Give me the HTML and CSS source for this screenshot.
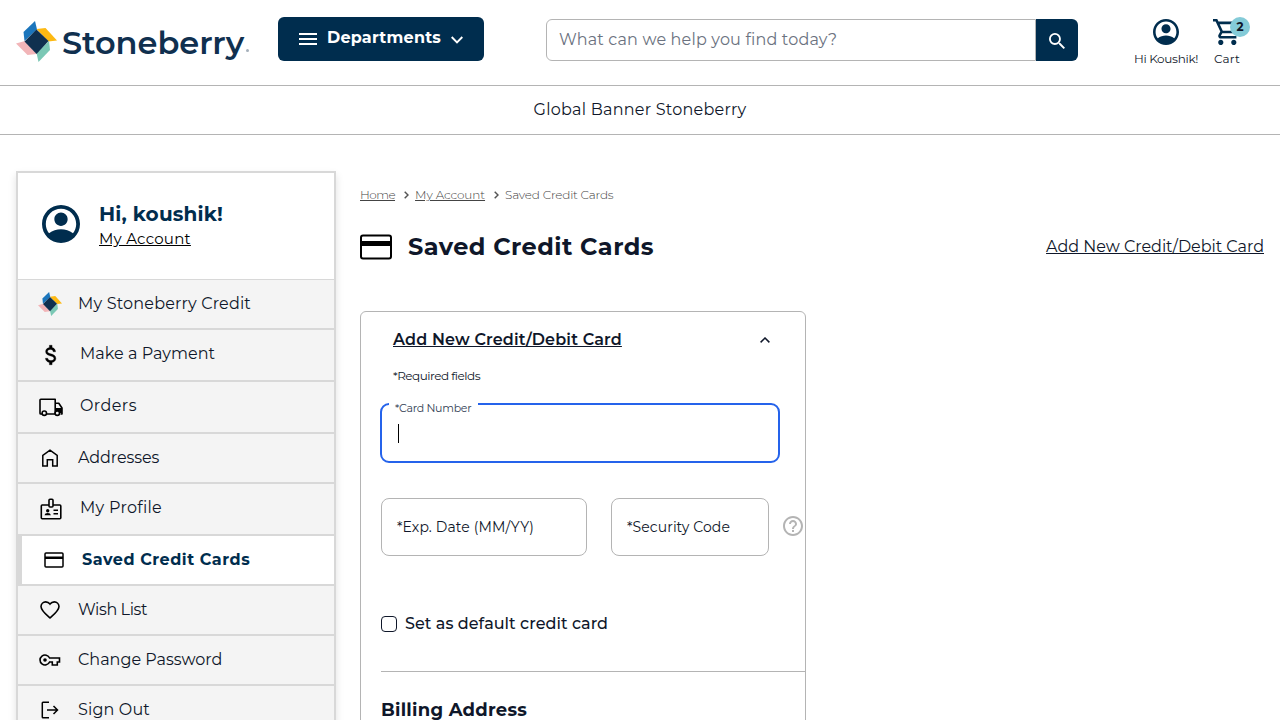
FILE: index.html
```html
<!DOCTYPE html>
<html lang="en">
<head>
<meta charset="utf-8">
<title>Saved Credit Cards</title>
<link rel="stylesheet" href="styles.css">
</head>
<body>
<svg class="defs" width="0" height="0">
  <symbol id="pinwheel" viewBox="0 0 41 41">
    <path fill="#1b75bc" d="M19 0 7.500 11 8.500 20 21 8.500z"/>
    <path fill="#fdb913" d="M20.500 8 29.500 7 41 19.500 32.500 20.500z"/>
    <path fill="#f2b5b8" d="M0 22.500 9 20 20.500 33 11.500 34z"/>
    <path fill="#7bc8b5" d="M33 20 34 29 22.500 41 20.500 32z"/>
    <path fill="#10304f" d="M20.500 8.500 32.500 20 20.500 33 8.500 20.500z"/>
  </symbol>
  <symbol id="account" viewBox="2 2 20 20">
    <path d="M12 2C6.480 2 2 6.480 2 12s4.480 10 10 10 10-4.480 10-10S17.520 2 12 2zM4 12c0-4.420 3.580-8 8-8s8 3.580 8 8c0 1.850-.63 3.550-1.690 4.900C16.450 15.300 14.300 14.700 12 14.700s-4.450.6-6.310 2.200C4.630 15.550 4 13.850 4 12zm8-6c-1.930 0-3.500 1.570-3.500 3.500S10.070 13 12 13s3.500-1.570 3.500-3.500S13.930 6 12 6z"/>
  </symbol>
</svg>
<header class="header">
  <a class="logo">
    <svg class="logo-mark"><use href="#pinwheel"/></svg>
    <span class="logo-word">Stoneberry</span><span class="logo-reg"></span>
  </a>
  <button class="departments">
    <svg width="18" height="12" viewBox="0 0 18 12"><path fill="#fff" d="M0 0h18v2H0zM0 5h18v2H0zM0 10h18v2H0z"/></svg>
    <span class="departments-label">Departments</span>
    <svg class="departments-chevron" width="12" height="8" viewBox="0 0 12 8"><path d="M.7 1l5.300 5.300L11.300 1" fill="none" stroke="#fff" stroke-width="1.900"/></svg>
  </button>
  <div class="search">
    <div class="search-field"><span class="search-text">What can we help you find today?</span></div>
    <div class="search-button"><svg width="16" height="16" viewBox="3 3 17.500 17.500"><path fill="#fff" d="M15.500 14h-.79l-.28-.27A6.471 6.471 0 0 0 16 9.500 6.500 6.500 0 1 0 9.500 16c1.610 0 3.090-.59 4.230-1.570l.27.28v.79l5 4.990L20.490 19l-4.990-5zm-6 0C7.010 14 5 11.990 5 9.500S7.010 5 9.500 5 14 7.010 14 9.500 11.990 14 9.500 14z"/></svg></div>
  </div>
  <div class="tool tool-user">
    <svg class="navy" width="26" height="26"><use href="#account"/></svg>
    <span class="tool-name">Hi Koushik!</span>
  </div>
  <div class="tool tool-cart">
    <svg class="navy cart-icon" width="26" height="26" viewBox="1 2 20 20"><path d="M15.550 13c.75 0 1.410-.41 1.750-1.030l3.580-6.490A.996.996 0 0 0 20.010 4H5.210l-.94-2H1v2h2l3.600 7.590-1.350 2.440C4.520 15.370 5.480 17 7 17h12v-2H7l1.100-2h7.450zM6.160 6h12.150l-2.760 5H8.530L6.160 6zM7 18c-1.100 0-1.990.9-1.990 2S5.900 22 7 22s2-.9 2-2-.9-2-2-2zm10 0c-1.100 0-1.990.9-1.990 2s.89 2 1.990 2 2-.9 2-2-.9-2-2-2z"/></svg>
    <span class="tool-cart-name">Cart</span>
    <b class="badge">2</b>
  </div>
</header>
<div class="banner"><span class="banner-text">Global Banner Stoneberry</span></div>
<main class="page">
  <nav class="side">
    <div class="profile">
      <svg class="navy" width="38" height="38"><use href="#account"/></svg>
      <div class="profile-text">
        <span class="profile-name">Hi, koushik!</span>
        <a class="profile-link">My Account</a>
      </div>
    </div>
    <a class="item"><svg width="24" height="24"><use href="#pinwheel"/></svg><span class="l-credit">My Stoneberry Credit</span></a>
    <a class="item tall"><svg width="26" height="26" viewBox="0 0 24 24"><path stroke="#000" stroke-width=".3" d="M11.800 10.900c-2.270-.59-3-1.200-3-2.150 0-1.090 1.010-1.850 2.700-1.850 1.780 0 2.440.85 2.500 2.100h2.210c-.07-1.720-1.120-3.300-3.210-3.810V3h-2.500v2.160c-1.940.42-3.500 1.680-3.500 3.610 0 2.310 1.910 3.460 4.700 4.130 2.500.6 3 1.480 3 2.410 0 .69-.49 1.790-2.700 1.790-2.060 0-2.870-.92-2.980-2.100h-2.200c.12 2.190 1.760 3.420 3.680 3.830V21H13v-2.150c1.950-.37 3.500-1.500 3.500-3.550 0-2.840-2.430-3.810-4.700-4.400z"/></svg><span class="l-payment">Make a Payment</span></a>
    <a class="item tall"><svg width="26" height="26" viewBox="0 0 26 26"><path d="M4.500 20H2.800q-.8 0-.8-.8V6q0-.8.8-.8h14.400V20H7.500M17.200 9.300h3.600L24 14v6h-1.500" fill="none" stroke="#000" stroke-width="1.600" stroke-linejoin="round"/><path d="M18 14h6v5h-6z"/><circle cx="6.300" cy="19.200" r="2.200" fill="#f4f4f4" stroke="#000" stroke-width="1.600"/><circle cx="19.300" cy="19.200" r="2.200" fill="#f4f4f4" stroke="#000" stroke-width="1.600"/></svg><span class="l-orders">Orders</span></a>
    <a class="item"><svg width="24" height="24" viewBox="0 0 24 24" fill="none" stroke="#000" stroke-width="1.500"><path d="M4.800 20V9.500L12 4.200l7.200 5.300V20h-4.500v-6.200H9.300V20z"/></svg><span class="l-addresses">Addresses</span></a>
    <a class="item tall"><svg width="26" height="26" viewBox="0 0 26 26" fill="none" stroke="#000" stroke-width="1.600"><path d="M11 9H4.200Q3.300 9 3.300 10v11.800q0 1 .9 1h17.600q1 0 1-1V10q0-1-1-1H15"/><rect x="11" y="3.300" width="4" height="7.700" rx="1"/><path d="M15.500 14.300H20M15.500 17.800H20"/><g fill="#000" stroke="none"><circle cx="9.700" cy="14.700" r="1.700"/><path d="M6.500 19.200q.3-2.200 3.200-2.200t3.200 2.200z"/></g></svg><span class="l-profile">My Profile</span></a>
    <a class="item current"><svg width="24" height="24" viewBox="0 0 24 24"><rect x="3" y="5" width="18" height="14" rx="1" fill="none" stroke="#000" stroke-width="1.500"/><path d="M3 8.500h18V11H3z"/></svg><span class="l-saved">Saved Credit Cards</span></a>
    <a class="item"><svg width="24" height="24" viewBox="0 0 24 24" fill="none" stroke="#000" stroke-width="1.600"><path d="M12 20C8 16.500 3 12.500 3 8.500A4.700 4.700 0 0 1 7.700 3.900c1.700 0 3.200.8 4.300 2.200 1.100-1.400 2.600-2.200 4.300-2.200A4.700 4.700 0 0 1 21 8.500c0 4-5 8-9 11.500z"/></svg><span class="l-wish">Wish List</span></a>
    <a class="item"><svg width="24" height="24" viewBox="0 0 24 24" fill="none" stroke="#000" stroke-width="1.600"><path d="M11.600 10A5 5 0 1 0 11.600 14h2.700v3h5v-3h2.200v-4z"/><circle cx="7" cy="12" r="1.800" fill="#000" stroke="none"/></svg><span class="l-password">Change Password</span></a>
    <a class="item"><svg width="24" height="24" viewBox="0 0 24 24" fill="none" stroke="#000" stroke-width="1.500"><path d="M11 4.200H5Q4.300 4.200 4.300 5v14q0 .8.700.8h6M9 12h10M15.500 8l4 4-4 4"/></svg><span class="l-signout">Sign Out</span></a>
  </nav>
  <section class="content">
    <div class="crumbs">
      <a class="crumb-home">Home</a>
      <svg class="sep" width="5" height="8" viewBox="0 0 5 8"><path d="M.7.700 4 4 .7 7.300" fill="none" stroke="#555" stroke-width="1.500"/></svg>
      <a class="crumb-account">My Account</a>
      <svg class="sep" width="5" height="8" viewBox="0 0 5 8"><path d="M.7.700 4 4 .7 7.300" fill="none" stroke="#555" stroke-width="1.500"/></svg>
      <span class="crumb-saved">Saved Credit Cards</span>
    </div>
    <div class="title-row">
      <svg width="32" height="26" viewBox="0 0 32 26"><rect x="1" y="1.500" width="30" height="23" rx="2" fill="none" stroke="#000" stroke-width="2"/><path d="M1 7h30v5H1z"/></svg>
      <h1 class="title">Saved Credit Cards</h1>
      <a class="add-link">Add New Credit/Debit Card</a>
    </div>
    <div class="panel">
      <div class="panel-head">
        <a class="panel-title">Add New Credit/Debit Card</a>
        <svg width="10" height="6" viewBox="0 0 10 6"><path d="M.6 5.400 5 1l4.400 4.400" fill="none" stroke="#0f172a" stroke-width="1.500"/></svg>
      </div>
      <div class="required"><span class="required-text">*Required fields</span></div>
      <div class="number-field"><span class="float-label"><span class="number-label">*Card Number</span></span><i class="caret"></i></div>
      <div class="fields">
        <div class="field exp"><span class="exp-label">*Exp. Date (MM/YY)</span></div>
        <div class="field code"><span class="code-label">*Security Code</span></div>
        <svg class="help" width="20" height="20" viewBox="2 2 20 20"><path fill="#b4b4b4" d="M11 18h2v-2h-2v2zm1-16C6.480 2 2 6.480 2 12s4.480 10 10 10 10-4.480 10-10S17.520 2 12 2zm0 18c-4.410 0-8-3.590-8-8s3.590-8 8-8 8 3.590 8 8-3.590 8-8 8zm0-14c-2.210 0-4 1.790-4 4h2c0-1.100.9-2 2-2s2 .9 2 2c0 2-3 1.750-3 5h2c0-2.250 3-2.500 3-5 0-2.210-1.790-4-4-4z"/></svg>
      </div>
      <label class="default"><span class="box"></span><span class="default-label">Set as default credit card</span></label>
      <div class="billing"><h2 class="billing-title">Billing Address</h2></div>
    </div>
  </section>
</main>
</body>
</html>
```
FILE: styles.css
```css
* { box-sizing: border-box; }
html { overflow: hidden; }
body { margin: 0; height: 720px; overflow: hidden; font-family: Montserrat, Inter, sans-serif; font-size: 16px; line-height: 24px; color: #0f172a; background: #fff; }
.defs { position: absolute; }
svg { display: block; flex: none; }
span, a { white-space: nowrap; }
.navy { fill: #002d4e; }
.header { height: 86px; border-bottom: 1px solid #b4b4b4; display: flex; align-items: flex-start; }
.logo { display: flex; width: 234px; margin: 21px 28px 0 16px; }
.logo-mark { width: 41px; height: 41px; }
.logo-word { width: 183px; margin-left: 5px; font-size: 32px; line-height: 43px; font-weight: 600; letter-spacing: -.05px; color: #10304f; }
.logo-reg { width: 3px; height: 3px; margin: 28px 0 0 1px; border-radius: 50%; background: #a5b0bb; flex: none; }
.departments { width: 206px; height: 44px; margin-top: 17px; padding: 0 0 0 21px; border: 0; border-radius: 6px; background: #002d4e; color: #fff; font: inherit; display: flex; align-items: center; }
.departments-label { margin: -3px 10px 0 10px; font-weight: 700; letter-spacing: .22px; }
.departments-chevron { margin-top: 1px; }
.search { display: flex; width: 532px; height: 42px; margin: 19px 0 0 62px; }
.search-field { width: 490px; border: 1px solid #b4b4b4; border-radius: 6px 0 0 6px; padding: 8px 12px; color: #6b7280; }
.search-text { letter-spacing: .17px; }
.search-button { width: 42px; background: #002d4e; border-radius: 0 6px 6px 0; display: flex; align-items: center; justify-content: center; padding-top: 2px; }
.tool { display: flex; flex-direction: column; align-items: center; font-size: 12px; line-height: 16px; margin-top: 19px; gap: 6px; position: relative; }
.tool-user { margin-left: 56px; width: 64px; }
.tool-name { letter-spacing: -.3px; }
.tool-cart { margin-left: 15px; width: 28px; }
.cart-icon { margin-left: -2px; }
.tool-cart-name { letter-spacing: .15px; }
.badge { position: absolute; left: 17px; top: -2px; width: 20px; height: 20px; border-radius: 50%; background: #84cbd8; line-height: 20px; text-align: center; }
.banner { height: 49px; border-bottom: 1px solid #b4b4b4; text-align: center; padding-top: 12px; }
.banner-text { letter-spacing: .24px; }
.page { display: flex; height: 585px; padding: 36px 16px 0; gap: 24px; overflow: hidden; }
.side { width: 320px; height: 600px; flex: none; border: 2px solid #d8d8d8; box-shadow: 0 4px 8px rgba(0,0,0,.12); }
.profile { height: 107px; border-bottom: 1px solid #d8d8d8; display: flex; padding: 29px 23px 0 23px; gap: 20px; }
.profile > svg { margin: 3px -.5px 0 .5px; }
.profile-text { display: flex; flex-direction: column; align-items: flex-start; }
.profile-name { font-size: 20px; font-weight: 700; line-height: 25px; letter-spacing: .18px; color: #002d4e; }
.profile-link { font-size: 15px; letter-spacing: .25px; color: #000; text-decoration: underline; }
.item { height: 50px; border-bottom: 2px solid #d8d8d8; background: #f4f4f4; padding-left: 20px; display: flex; align-items: center; gap: 16px; }
.item.tall { height: 52px; }
.item.tall span { margin-top: -2px; }
.item.current { background: #fff; border-left: 4px solid #d8d8d8; color: #002d4e; font-weight: 700; }
.l-credit { letter-spacing: .18px; }
.l-payment { letter-spacing: .05px; }
.l-orders { letter-spacing: .42px; }
.l-addresses { letter-spacing: -.1px; }
.l-profile { letter-spacing: .28px; }
.l-saved { letter-spacing: .54px; }
.l-wish { letter-spacing: -.4px; }
.l-signout { letter-spacing: .15px; }
.content { flex: 1; }
.crumbs { margin-top: 16px; height: 16px; display: flex; align-items: center; font-size: 12px; line-height: 16px; color: #444; font-weight: 300; }
.crumbs a, .add-link, .panel-title { text-decoration: underline; }
.crumb-home { letter-spacing: -.53px; }
.crumb-account { letter-spacing: -.07px; }
.crumb-saved { letter-spacing: -.18px; }
.sep { margin: 0 6px 0 9px; }
.title-row { margin-top: 28px; height: 32px; display: flex; align-items: center; }
.title { margin: 0 0 0 16px; font-size: 24px; line-height: 32px; letter-spacing: .46px; }
.add-link { margin-left: auto; letter-spacing: -.02px; }
.panel { width: 446px; height: 560px; margin-top: 48px; border: 1px solid #b4b4b4; border-radius: 6px; padding: 16px 0 0 20px; }
.panel-head { display: flex; align-items: center; justify-content: space-between; padding: 0 35px 0 12px; font-weight: 600; letter-spacing: .15px; }
.required { padding: 16px 0 0 12px; font-size: 12px; line-height: 16px; letter-spacing: -.49px; }
.number-field { position: relative; width: 400px; height: 60px; margin: 19px 0 0 -1px; border: 2px solid #2563eb; border-radius: 9px; }
.float-label { position: absolute; left: 7px; top: -5px; width: 89px; padding-left: 6px; background: #fff; font-size: 11px; line-height: 16px; letter-spacing: -.27px; color: #334155; }
.caret { position: absolute; left: 16px; top: 19px; width: 1px; height: 19px; background: #000; }
.fields { display: flex; align-items: center; margin-top: 35px; font-size: 14px; }
.field { height: 58px; border: 1px solid #b4b4b4; border-radius: 8px; padding: 16px 15px; }
.exp { width: 206px; letter-spacing: .13px; }
.code { width: 158px; margin: 0 14px 0 24px; letter-spacing: .08px; }
.help { margin-top: -2px; }
.default { display: flex; align-items: center; gap: 8px; margin-top: 56px; font-weight: 500; letter-spacing: .04px; }
.box { width: 16px; height: 16px; border: 1px solid #0f172a; border-radius: 4px; }
.billing { margin-top: 35px; border-top: 1px solid #b4b4b4; padding-top: 24px; }
.billing-title { margin: 0; font-size: 18px; line-height: 28px; letter-spacing: .25px; }
```
